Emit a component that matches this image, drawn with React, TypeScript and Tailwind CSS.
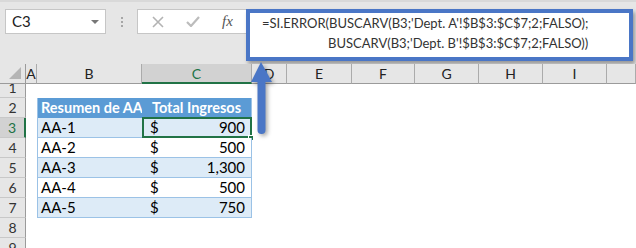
import React from "react";

const ROWS = [
  { n: 3, name: "AA-1", value: "900" },
  { n: 4, name: "AA-2", value: "500" },
  { n: 5, name: "AA-3", value: "1,300" },
  { n: 6, name: "AA-4", value: "500" },
  { n: 7, name: "AA-5", value: "750" },
];

const COLS = ["A", "B", "C", "D", "E", "F", "G", "H", "I", ""];

const Toolbar = () => (
  <div className="h-[64px] bg-[#e6e6e6] border-t-2 border-[#d9d9d9] flex items-start pt-[7px] pl-[5px]">
    <div className="w-[101px] h-[25px] bg-white border border-[#c6c6c6] flex items-center justify-between pl-[6px] pr-[6px] text-[15px] text-[#222]">
      <span>C3</span>
      <span className="w-0 h-0 border-l-[4px] border-r-[4px] border-t-[4px] border-l-transparent border-r-transparent border-t-[#777]" />
    </div>
    <div className="w-[31px] h-[25px] flex flex-col items-center justify-center gap-[2px]">
      <span className="w-[2px] h-[2px] bg-[#a6a6a6]" />
      <span className="w-[2px] h-[2px] bg-[#a6a6a6]" />
      <span className="w-[2px] h-[2px] bg-[#a6a6a6]" />
    </div>
    <div className="w-[109px] h-[25px] bg-white border border-r-0 border-[#c6c6c6] flex items-center">
      <svg width="12" height="12" viewBox="0 0 12 12" className="ml-[14px]">
        <path d="M1 1L11 11M11 1L1 11" stroke="#b3b3b3" strokeWidth="1.6" />
      </svg>
      <svg width="14" height="11" viewBox="0 0 14 11" className="ml-[22px]">
        <path d="M1 6L5 10L13 1" stroke="#bcbcbc" strokeWidth="2.2" fill="none" />
      </svg>
      <span className="ml-[22px] text-[15px] italic text-[#555] font-['Liberation_Serif',serif]">fx</span>
    </div>
    <div className="w-[387px] h-[52px] border-[4px] border-[#4a76c6] bg-white shadow-[2px_3px_4px_rgba(0,0,0,0.35)] text-[13px] leading-[20px] text-[#333]">
      <div className="pl-[12px]">=SI.ERROR(BUSCARV(B3;'Dept. A'!$B$3:$C$7;2;FALSO);</div>
      <div className="pl-[78px]">BUSCARV(B3;'Dept. B'!$B$3:$C$7;2;FALSO))</div>
    </div>
  </div>
);

const RowHead = ({ n, h, active }: { n: number; h: string; active?: boolean }) => (
  <div
    className={`${h} flex items-end justify-center pb-[1px] text-[14px] leading-[16px] border-b border-[#c8c8c8] overflow-hidden ${
      active
        ? "bg-[#d2d2d2] text-[#217346] border-r-2 border-r-[#217346]"
        : "bg-[#e6e6e6] text-[#333] border-r border-r-[#9b9b9b]"
    }`}
  >
    {n}
  </div>
);

const Sheet = () => (
  <div className="grid grid-cols-[26px_11px_105px_110px_35px_65px_63px_64px_64px_64px_29px]">
    {/* header row */}
    <div className="h-[20px] bg-[#e6e6e6] border-r border-b border-[#9b9b9b] relative">
      <svg width="14" height="14" viewBox="0 0 14 14" className="absolute right-[3px] bottom-[3px]">
        <path d="M13 1V13H1Z" fill="#b5b5b5" />
      </svg>
    </div>
    {COLS.map((c) =>
      c === "C" ? (
        <div
          key={c}
          className="h-[20px] bg-[#d2d2d2] border-r border-[#ababab] border-b-2 border-b-[#217346] flex items-center justify-center text-[14px] text-[#217346]"
        >
          {c}
        </div>
      ) : (
        <div
          key={c || "J"}
          className="h-[20px] bg-[#e6e6e6] border-r border-[#ababab] border-b border-b-[#9b9b9b] flex items-center justify-center text-[14px] text-[#222]"
        >
          {c}
        </div>
      )
    )}

    {/* row 1 */}
    <RowHead n={1} h="h-[14px]" />
    <div className="col-span-10" />

    {/* row 2 - table header */}
    <RowHead n={2} h="h-[20px]" />
    <div />
    <div className="h-[20px] bg-[#5b9bd5] text-white font-bold text-[14.5px] whitespace-nowrap flex items-center pl-[3px] border-l border-[#9bc2e6]">
      Resumen de AA
    </div>
    <div className="h-[20px] bg-[#5b9bd5] text-white font-bold text-[14.5px] whitespace-nowrap flex items-center justify-center border-r border-[#9bc2e6]">
      Total Ingresos
    </div>
    <div className="col-span-7" />

    {ROWS.map((r) => {
      const bg = r.n % 2 === 1 ? "bg-[#ddebf7]" : "bg-white";
      const active = r.n === 3;
      return (
        <React.Fragment key={r.n}>
          <RowHead n={r.n} h="h-[20px]" active={active} />
          <div />
          <div className={`h-[20px] ${bg} border-l border-b border-[#9bc2e6] flex items-center pl-[3px] text-[15px] text-black`}>
            {r.name}
          </div>
          <div className={`h-[20px] ${bg} border-r border-b border-[#9bc2e6] relative flex items-center justify-between pl-[8px] pr-[6px] text-[15px] text-black`}>
            <span>$</span>
            <span>{r.value}</span>
            {active && (
              <>
                <div className="absolute left-0 top-[-1px] right-[-1px] bottom-[-1px] border-2 border-[#217346]" />
                <div className="absolute right-[-3px] bottom-[-4px] w-[6px] h-[6px] bg-[#217346] border border-white" />
              </>
            )}
          </div>
          <div className="col-span-7" />
        </React.Fragment>
      );
    })}

    <RowHead n={8} h="h-[20px]" />
    <div className="col-span-10" />
    <RowHead n={9} h="h-[20px]" />
    <div className="col-span-10" />
  </div>
);

const Arrow = () => (
  <svg
    width="30"
    height="84"
    viewBox="0 0 30 84"
    className="absolute left-[248px] top-[58px] drop-shadow-[2px_2px_2px_rgba(0,0,0,0.35)]"
  >
    <path d="M13 4L24 24H17.5V72A4 4 0 0 1 9.5 72V24H3Z" fill="#4a76c6" />
  </svg>
);

export default function App() {
  return (
    <div className="relative w-[636px] h-[248px] overflow-hidden bg-white font-['Lato',sans-serif]">
      <Toolbar />
      <Sheet />
      <Arrow />
    </div>
  );
}
